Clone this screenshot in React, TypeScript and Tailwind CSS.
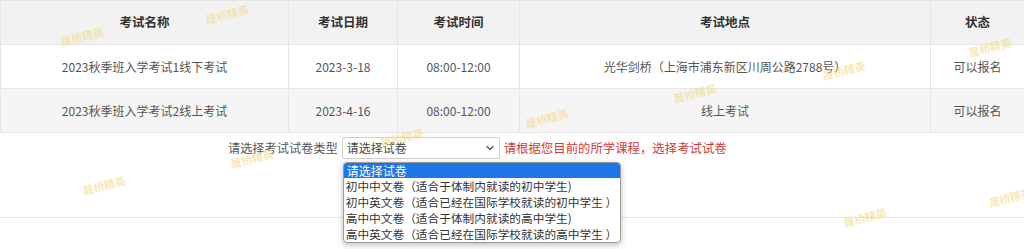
import { ChevronDown } from 'lucide-react';

const rows = [
  {
    name: '2023秋季班入学考试1线下考试',
    date: '2023-3-18',
    time: '08:00-12:00',
    place: '光华剑桥（上海市浦东新区川周公路2788号）',
    status: '可以报名',
    bg: 'bg-white',
  },
  {
    name: '2023秋季班入学考试2线上考试',
    date: '2023-4-16',
    time: '08:00-12:00',
    place: '线上考试',
    status: '可以报名',
    bg: 'bg-[#f5f5f5]',
  },
];

const options = [
  '初中中文卷（适合于体制内就读的初中学生)',
  '初中英文卷（适合已经在国际学校就读的初中学生 ）',
  '高中中文卷（适合于体制内就读的高中学生)',
  '高中英文卷（适合已经在国际学校就读的高中学生 ）',
];

// faint rotated watermarks scattered over the page
const marks = [
  'left-[205px] top-[9px]',
  'left-[60px] top-[31px]',
  'left-[968px] top-[42px]',
  'left-[822px] top-[65px]',
  'left-[673px] top-[88px]',
  'left-[525px] top-[113px]',
  'left-[380px] top-[132px]',
  'left-[230px] top-[153px]',
  'left-[82px] top-[180px]',
  'left-[988px] top-[192px]',
  'left-[843px] top-[212px]',
];

export default function App() {
  return (
    <div className="relative w-[1024px] h-[249px] overflow-hidden bg-white font-['Noto_Sans_CJK_SC','Noto_Sans',sans-serif] text-[12px] text-[#555]">
      <table className="w-[1024px] table-fixed border-collapse">
        <colgroup>
          <col className="w-[288px]" />
          <col className="w-[109px]" />
          <col className="w-[122px]" />
          <col className="w-[411px]" />
          <col className="w-[94px]" />
        </colgroup>
        <thead>
          <tr className="h-[44px] bg-[#f2f2f2]">
            {['考试名称', '考试日期', '考试时间', '考试地点', '状态'].map((h) => (
              <th
                key={h}
                className="border border-[#e6e6e6] text-center font-bold text-[12.5px] text-[#333] leading-none"
              >
                {h}
              </th>
            ))}
          </tr>
        </thead>
        <tbody>
          {rows.map((r) => (
            <tr key={r.name} className={`h-[44px] ${r.bg}`}>
              <td className="border border-[#e6e6e6] text-center leading-none">{r.name}</td>
              <td className="border border-[#e6e6e6] text-center leading-none">{r.date}</td>
              <td className="border border-[#e6e6e6] text-center leading-none">{r.time}</td>
              <td className="border border-[#e6e6e6] text-center leading-none">{r.place}</td>
              <td className="border border-[#e6e6e6] text-center leading-none">{r.status}</td>
            </tr>
          ))}
        </tbody>
      </table>

      <div className="h-[85px] border-b border-[#e8e8e8] pt-[4px]">
        <div className="flex items-center pl-[228px] h-[22px]">
          <span className="leading-none text-[12.2px]">请选择考试试卷类型</span>
          <div className="relative ml-[4px]">
            <div className="flex items-center justify-between w-[158px] h-[22px] border border-[#cfcfcf] rounded-[2px] bg-white pl-[4px] pr-[3px]">
              <span className="leading-none text-[#444]">请选择试卷</span>
              <ChevronDown className="w-[12px] h-[12px] text-[#555]" strokeWidth={2.5} />
            </div>
            <div className="absolute left-[1px] top-[25px] w-[278px] rounded-[4px] border border-[#9a9a9a] bg-white shadow-[0_2px_6px_rgba(0,0,0,0.25)] overflow-hidden z-10">
              <div className="h-[15px] bg-[#1e76e6] text-white text-[12px] leading-[15px] pl-[3px]">请选择试卷</div>
              {options.map((o) => (
                <div key={o} className="h-[16px] text-[11.7px] leading-[16px] text-[#333] pl-[2px] whitespace-nowrap">
                  {o}
                </div>
              ))}
            </div>
          </div>
          <span className="ml-[4px] leading-none text-[12.4px] text-[#d43a3a]">请根据您目前的所学课程，选择考试试卷</span>
        </div>
      </div>

      {marks.map((m) => (
        <span
          key={m}
          className={`absolute ${m} -rotate-[14deg] whitespace-nowrap text-[11px] leading-none font-bold text-[#f3d98a]/60 pointer-events-none`}
        >
          晟桥精英
        </span>
      ))}
    </div>
  );
}
